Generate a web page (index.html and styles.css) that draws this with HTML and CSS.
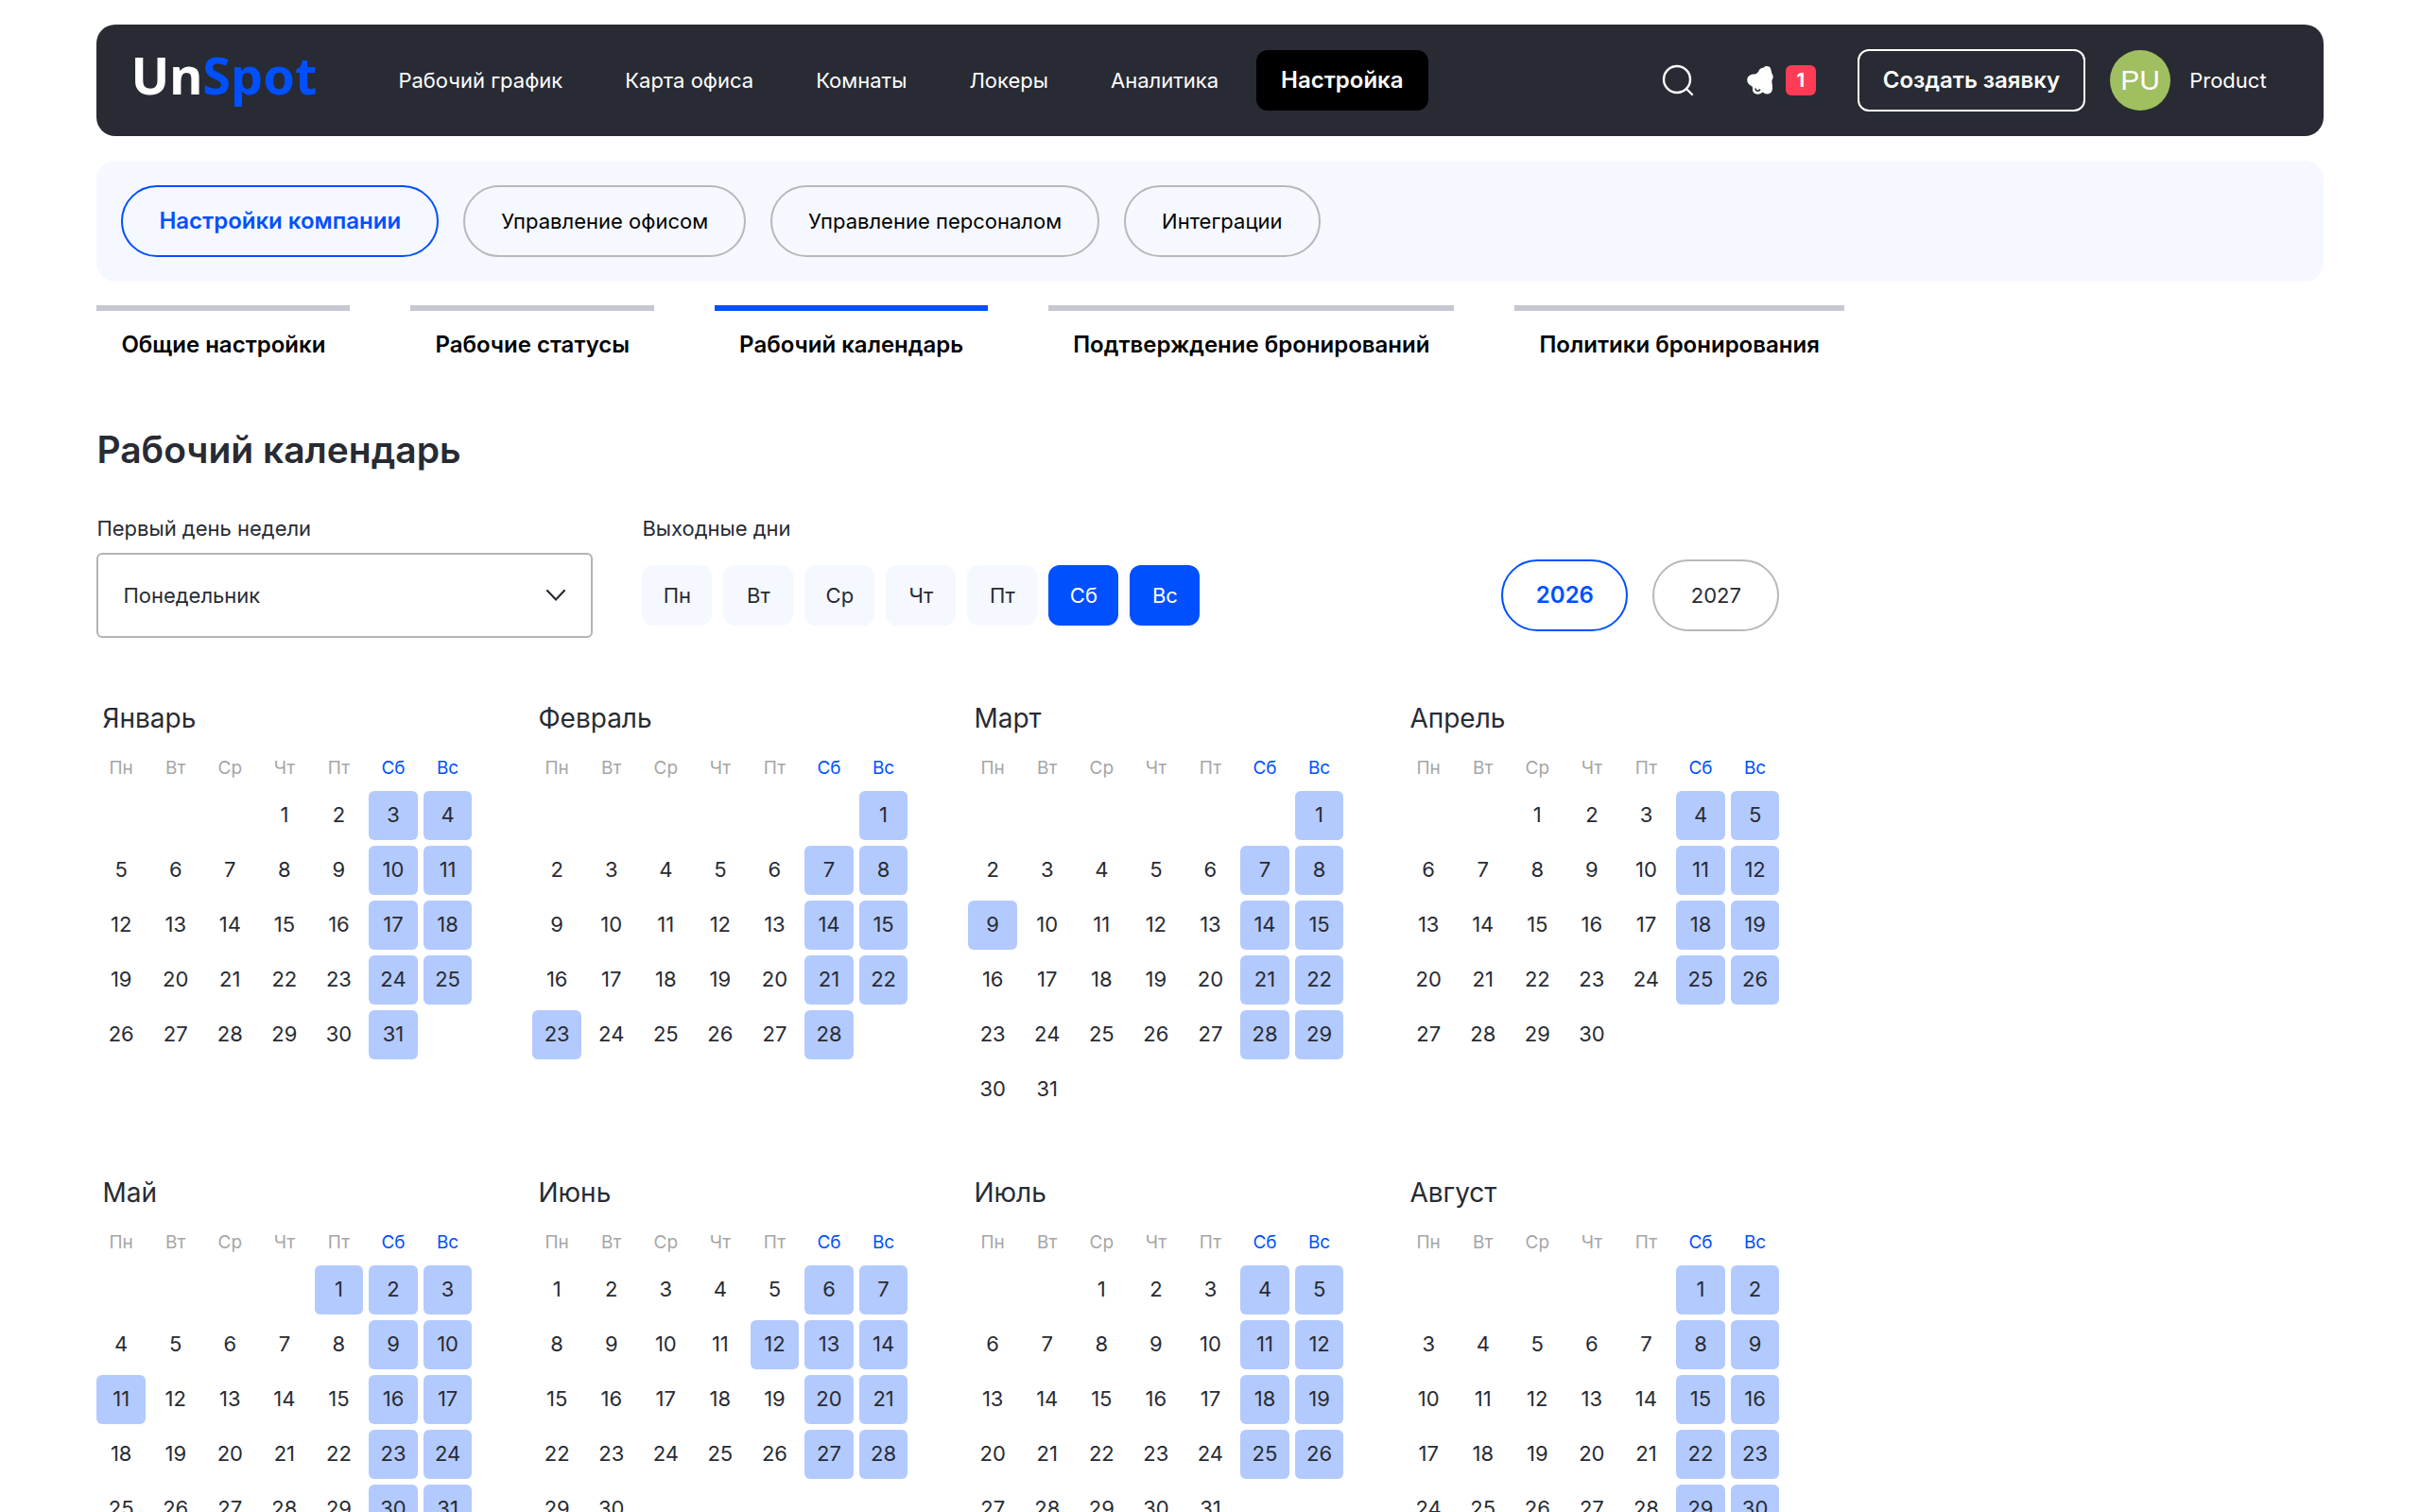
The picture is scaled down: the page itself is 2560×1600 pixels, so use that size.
FILE: index.html
```
<!DOCTYPE html>
<html lang="ru">
<head>
    <meta charset="UTF-8">
    <meta name="viewport" content="width=device-width, initial-scale=1.0">
    <title>Рабочий календарь</title>
    <link rel="stylesheet" href="styles.css">
</head>
<body>
    <header class="header">
        <a class="logo" href="#">Un<span>Spot</span></a>
        <nav class="menu">
            <a href="#">Рабочий график</a>
            <a href="#">Карта офиса</a>
            <a href="#">Комнаты</a>
            <a href="#">Локеры</a>
            <a href="#">Аналитика</a>
            <a class="active" href="#">Настройка</a>
        </nav>
        <div class="tools">
            <button class="icon-btn" type="button" aria-label="Поиск">
                <svg width="34" height="34" viewBox="0 0 34 34" fill="none" stroke="#fff" stroke-width="2.400" stroke-linecap="round">
                    <circle cx="16" cy="16" r="14"/>
                    <path d="M26 26l6 6"/>
                </svg>
            </button>
            <button class="icon-btn news" type="button" aria-label="Новости">
                <svg width="28" height="32" viewBox="0 0 28 32">
                    <path fill="#fff" d="M18 2.500C19 0.500 24 0.500 25 3.500C26 5.500 25.500 7 26.500 9C28.500 12 27.500 14 26.500 16C26 18 27 20 27 24C27 27 25.500 30.500 21.500 30.500C19 30.500 18 29 16 28.500C15.500 31 8 32 6.500 28C5.500 25.500 6.500 24 5.500 22.500C1.500 20.500 0 18 0.300 15C0.500 11.500 4 9.500 8 9.500C11 9 11.500 7.500 13 5C14.500 3 16 3 18 2.500Z"/>
                    <path fill="none" stroke="#282b33" stroke-width="1.600" d="M9 24.500C9.500 28 12.500 28 14 25.500"/>
                </svg>
                <span class="badge">1</span>
            </button>
            <button class="create-btn" type="button">Создать заявку</button>
            <a class="user" href="#">
                <span class="avatar">PU</span>
                <span>Product</span>
            </a>
        </div>
    </header>

    <nav class="sections">
        <a class="pill active" href="#">Настройки компании</a>
        <a class="pill" href="#">Управление офисом</a>
        <a class="pill" href="#">Управление персоналом</a>
        <a class="pill" href="#">Интеграции</a>
    </nav>

    <nav class="tabs">
        <a href="#">Общие настройки</a>
        <a href="#">Рабочие статусы</a>
        <a class="active" href="#">Рабочий календарь</a>
        <a href="#">Подтверждение бронирований</a>
        <a href="#">Политики бронирования</a>
    </nav>

    <main class="content">
        <h1>Рабочий календарь</h1>
        <form class="settings">
            <div class="field first-day">
                <label for="first-day">Первый день недели</label>
                <div class="select-box">
                    <select id="first-day" name="first-day">
                        <option>Понедельник</option>
                    </select>
                    <svg width="22" height="14" viewBox="0 0 22 14" fill="none" stroke="#282b33" stroke-width="2.200" stroke-linecap="round">
                        <path d="M2 2l9 9.500L20 2"/>
                    </svg>
                </div>
            </div>
            <div class="field">
                <span class="label" id="days-off">Выходные дни</span>
                <div class="control-row days" role="group" aria-labelledby="days-off">
                    <button type="button">Пн</button>
                    <button type="button">Вт</button>
                    <button type="button">Ср</button>
                    <button type="button">Чт</button>
                    <button type="button">Пт</button>
                    <button type="button" class="active">Сб</button>
                    <button type="button" class="active">Вс</button>
                </div>
            </div>
            <div class="control-row years">
                <button type="button" class="pill active">2026</button>
                <button type="button" class="pill">2027</button>
            </div>
        </form>
        <div class="months" id="months"></div>
    </main>
    <script src="calendar.js"></script>
</body>
</html>
```
FILE: styles.css
```
* {
    box-sizing: border-box;
}
body {
    font-family: Inter, "Noto Sans", sans-serif;
    font-size: 22px;
    line-height: 28px;
    margin: 0;
    padding: 26px 4% 0;
    background-color: #fff;
    color: #282b33;
}
a {
    color: inherit;
    text-decoration: none;
}
button,
select {
    font: inherit;
    color: inherit;
}
button {
    cursor: pointer;
}
.header {
    display: flex;
    align-items: center;
    height: 118px;
    padding: 0 60px 0 36px;
    background-color: #282b33;
    color: #fff;
    border-radius: 20px;
}
.logo {
    font-family: "Noto Sans", sans-serif;
    font-size: 54px;
    line-height: 54px;
    font-weight: 700;
    padding-bottom: 12px;
}
.logo span {
    color: #0050ff;
}
.menu {
    display: flex;
    gap: 14px;
    margin-left: 60px;
}
.menu a {
    padding: 18px 26px;
    border-radius: 12px;
}
.menu .active {
    background-color: #000;
    font-size: 24px;
    font-weight: 600;
}
.tools {
    display: flex;
    align-items: center;
    margin-left: auto;
}
.icon-btn {
    display: flex;
    align-items: center;
    gap: 13px;
    padding: 0;
    border: none;
    background: none;
}
.news {
    margin: 0 44px 0 56px;
}
.badge {
    width: 32px;
    height: 32px;
    line-height: 32px;
    font-size: 20px;
    font-weight: 700;
    color: #fff;
    text-align: center;
    background-color: #ff3b55;
    border-radius: 6px;
}
.create-btn {
    height: 66px;
    padding: 0 25px;
    font-size: 24px;
    font-weight: 600;
    background: none;
    border: 2px solid #fff;
    border-radius: 12px;
}
.user {
    display: flex;
    align-items: center;
    gap: 20px;
    margin-left: 26px;
}
.avatar {
    width: 64px;
    height: 64px;
    line-height: 64px;
    font-family: "Liberation Sans", Arial, sans-serif;
    font-size: 30px;
    text-align: center;
    background-color: #a0bf60;
    border-radius: 50%;
}
.sections {
    display: flex;
    gap: 26px;
    margin-top: 26px;
    padding: 26px;
    background-color: #f5f8ff;
    border-radius: 20px;
    color: #000;
}
.pill {
    height: 76px;
    padding: 0 38px;
    line-height: 72px;
    text-align: center;
    background: none;
    border: 2px solid #b8b8b8;
    border-radius: 38px;
}
.pill.active {
    color: #0050ff;
    border-color: #0050ff;
    font-size: 24px;
    font-weight: 600;
}
.tabs {
    display: flex;
    gap: 64px;
    margin-top: 25px;
    color: #000;
    font-size: 24px;
    font-weight: 600;
}
.tabs a {
    padding: 0 26px;
    line-height: 72px;
    border-top: 6px solid #c5c7d3;
}
.tabs .active {
    border-color: #0050ff;
}
.content {
    max-width: 1780px;
}
h1 {
    margin: 51px 0 45px;
    font-size: 39px;
    line-height: 48px;
    font-weight: 600;
}
.settings {
    display: flex;
    align-items: flex-end;
    gap: 52px;
}
.first-day {
    flex: 0 1 525px;
}
.field label,
.field .label {
    display: block;
    margin-bottom: 12px;
}
.select-box {
    position: relative;
}
.select-box select {
    display: block;
    width: 100%;
    height: 90px;
    padding: 0 26px;
    appearance: none;
    background-color: #fff;
    border: 2px solid #b3b3b3;
    border-radius: 6px;
}
.select-box svg {
    position: absolute;
    right: 28px;
    top: 38px;
    pointer-events: none;
}
.control-row {
    display: flex;
    align-items: center;
    height: 90px;
}
.days {
    gap: 12px;
}
.days button {
    width: 74px;
    height: 64px;
    padding: 0;
    background-color: #f5f8ff;
    border: none;
    border-radius: 12px;
}
.days .active {
    background-color: #0050ff;
    color: #fff;
}
.years {
    gap: 26px;
    margin-left: auto;
}
.years .pill {
    width: 134px;
    padding: 0;
}
.months {
    display: grid;
    grid-template-columns: repeat(4, 1fr);
    gap: 52px 64px;
    margin-top: 60px;
}
.month h2 {
    margin: 0 0 4px;
    padding-left: 6px;
    font-size: 28px;
    line-height: 50px;
    font-weight: 400;
}
.month table {
    width: calc(100% + 12px);
    margin: 0 -6px;
    table-layout: fixed;
    border-spacing: 6px;
    text-align: center;
}
.month th {
    height: 36px;
    padding: 0;
    font-size: 19px;
    font-weight: 400;
    color: #a6a6a6;
}
.month .weekend {
    color: #0050ff;
}
.month td {
    height: 52px;
    padding: 0 0 2px;
    border-radius: 6px;
}
.month .off {
    background-color: #b3caff;
}
```
FILE: calendar.js
```
const YEAR = 2026;
const MONTHS = ['Январь', 'Февраль', 'Март', 'Апрель', 'Май', 'Июнь', 'Июль', 'Август'];
const DAYS = ['Пн', 'Вт', 'Ср', 'Чт', 'Пт', 'Сб', 'Вс'];

// public holidays on weekdays, "month-day"
const HOLIDAYS = ['2-23', '3-9', '5-1', '5-11', '6-12'];

function buildMonth(index) {
    const offset = (new Date(YEAR, index, 1).getDay() + 6) % 7;
    const count = new Date(YEAR, index + 1, 0).getDate();
    let head = '';
    let rows = '';

    DAYS.forEach((name, i) => {
        head += `<th scope="col"${i > 4 ? ' class="weekend"' : ''}>${name}</th>`;
    });

    // always six weeks, so that the months line up
    for (let week = 0; week < 6; week++) {
        rows += '<tr>';
        for (let i = 0; i < 7; i++) {
            const day = week * 7 + i - offset + 1;
            if (day < 1 || day > count) {
                rows += '<td></td>';
                continue;
            }
            const off = i > 4 || HOLIDAYS.includes(`${index + 1}-${day}`);
            rows += `<td${off ? ' class="off"' : ''}>${day}</td>`;
        }
        rows += '</tr>';
    }

    return `<section class="month">
        <h2>${MONTHS[index]}</h2>
        <table>
            <thead><tr>${head}</tr></thead>
            <tbody>${rows}</tbody>
        </table>
    </section>`;
}

document.getElementById('months').innerHTML = MONTHS.map((name, i) => buildMonth(i)).join('');
```
